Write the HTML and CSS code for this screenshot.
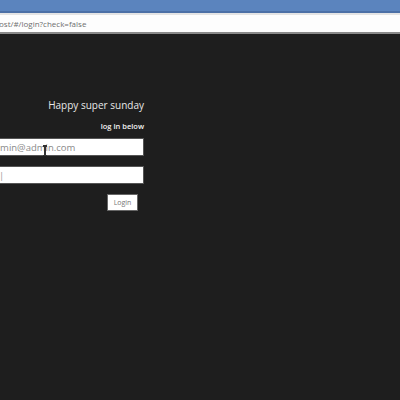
FILE: index.html
```html
<!DOCTYPE html>
<html>
<head>
<meta charset="utf-8">
<link rel="stylesheet" href="styles.css">
</head>
<body>
<div class="chrome">
  <div class="titlebar"></div>
  <div class="addressbar"><span class="url">ost/#/login?check=false</span></div>
</div>
<main class="page">
  <form class="login">
    <h1 class="title">Happy super sunday</h1>
    <p class="sub">log in below</p>
    <div class="field"><span class="value">admin@admin.com</span><span class="ibeam"></span></div>
    <div class="field"><span class="value">|</span></div>
    <button type="button" class="btn">Login</button>
  </form>
</main>
</body>
</html>
```
FILE: styles.css
```css
html, body {
  margin: 0;
  padding: 0;
  width: 400px;
  height: 400px;
  overflow: hidden;
  background: #1e1e1e;
  font-family: "Open Sans", "Liberation Sans", sans-serif;
}
.chrome {
  display: flex;
  flex-direction: column;
}
.titlebar {
  height: 11px;
  background: #5b84be;
  border-bottom: 2px solid #4c70a6;
}
.addressbar {
  height: 17px;
  background: #fdfdfd;
  border-top: 2px solid #e4e4e4;
  border-bottom: 2px solid #8a8a8a;
  display: flex;
  align-items: center;
  overflow: hidden;
}
.url {
  font-size: 8px;
  color: #6e6e6e;
  margin-left: -1px;
  white-space: nowrap;
}
.page {
  display: flex;
}
.login {
  margin-left: -60px;
  width: 204px;
  display: flex;
  flex-direction: column;
  align-items: flex-end;
  padding-top: 64px;
}
.title {
  margin: 0;
  font-size: 10px;
  font-weight: 400;
  color: #e8e8e8;
  line-height: 15px;
}
.sub {
  margin: 8px 0 0;
  font-size: 7.5px;
  font-weight: 600;
  color: #f2f2f2;
  line-height: 11px;
}
.field {
  position: relative;
  box-sizing: border-box;
  width: 204px;
  height: 18px;
  background: #fff;
  border: 1px solid #555;
  display: flex;
  align-items: center;
  padding-left: 58px;
  margin-top: 6px;
}
.field + .field {
  margin-top: 10px;
}
.value {
  font-size: 9.5px;
  color: #8a8a8a;
  white-space: nowrap;
  margin-left: -10px;
}
.field + .field .value {
  margin-left: 0;
  color: #999;
}
.ibeam {
  position: absolute;
  left: 103px;
  top: 6px;
  width: 1.5px;
  height: 11px;
  background: #333;
}
.ibeam::before, .ibeam::after {
  content: "";
  position: absolute;
  left: -1.5px;
  width: 4.5px;
  height: 1.5px;
  background: #333;
}
.ibeam::before { top: 0; }
.ibeam::after { bottom: 0; }
.btn {
  margin-top: 10px;
  margin-right: 6px;
  width: 31px;
  height: 17px;
  padding: 0;
  background: #fff;
  border: 1px solid #666;
  font-family: inherit;
  font-size: 7px;
  color: #777;
}
```
